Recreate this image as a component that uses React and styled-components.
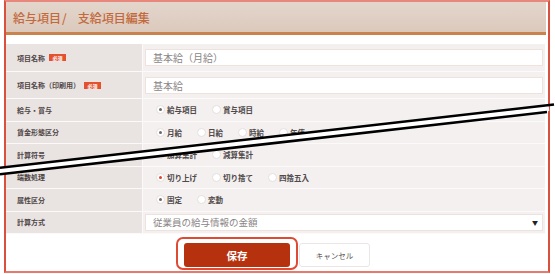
import styled, { createGlobalStyle } from "styled-components";

const Global = createGlobalStyle`
  html, body { margin: 0; padding: 0; background: #fff; }
  body { font-family: "Noto Sans CJK JP", "Noto Sans", sans-serif; }
`

const Page = styled.div`
  position: relative;
  width: 555px;
  height: 274px;
  overflow: hidden;
`

const Frame = styled.div`
  box-sizing: border-box;
  margin-left: 4px;
  width: 546px;
  height: 273px;
  border: 2px solid #d9503e;
  border-top-color: #e8887c;
  border-bottom-color: #e57a6d;
  display: flex;
  flex-direction: column;
`

const Header = styled.div`
  height: 30px;
  margin-right: 2px;
  padding-left: 7px;
  display: flex;
  align-items: center;
  background: linear-gradient(#e4d6cc, #dbc9bc);
  border-bottom: 3px solid #c8834e;
  font-size: 12px;
  font-weight: 500;
  color: #c3693c;
`

const Slash = styled.span`
  margin: 0 11px 0 1px;
`

const Table = styled.div`
  margin: 9px 3px 0 0;
  display: flex;
  flex-direction: column;
`

const Row = styled.div`
  box-sizing: border-box;
  display: flex;
  height: ${p => p.$h}px;
  border-bottom: 1px solid #fbf9f9;
`

const Label = styled.div`
  width: 136px;
  box-sizing: border-box;
  padding-left: 11px;
  display: flex;
  align-items: center;
  gap: 4px;
  background: #e9e3e2;
  font-size: 7px;
  font-weight: 700;
  color: #4f4646;
`

const Badge = styled.span`
  display: inline-flex;
  align-items: center;
  justify-content: center;
  width: 17px;
  height: 7px;
  background: #e4512f;
  color: #fff;
  font-size: 5px;
  font-weight: 700;
`

const Value = styled.div`
  flex: 1;
  display: flex;
  align-items: center;
  padding: 0 2px;
  background: #f4f0f0;
  border-left: 1px solid #fbf9f9;
`

const Field = styled.div`
  position: relative;
  flex: 1;
  box-sizing: border-box;
  height: 17px;
  padding-left: 7px;
  display: flex;
  align-items: center;
  background: #fff;
  border: 1px solid #eee2dc;
  font-size: ${p => p.$size || 10}px;
  color: #8a8585;
`

const Caret = styled.span`
  position: absolute;
  right: 4px;
  font-size: 6px;
  color: #222;
`

const Radios = styled.div`
  display: flex;
  padding-left: 11px;
  gap: 15px;
`

const Radio = styled.label`
  display: flex;
  align-items: center;
  gap: 2px;
  font-size: 7.5px;
  font-weight: 700;
  color: #4f4949;
`

const Circle = styled.span`
  box-sizing: border-box;
  width: 9px;
  height: 9px;
  border-radius: 50%;
  background: #fff;
  border: 1px solid #e6dfdf;
  display: flex;
  align-items: center;
  justify-content: center;
  &::after {
    content: "";
    width: 3px;
    height: 3px;
    border-radius: 50%;
    background: ${p => (p.$on ? p.$color || "#6f6a6a" : "transparent")};
  }
`

const Footer = styled.div`
  margin-top: 9px;
  display: flex;
  justify-content: center;
  gap: 9px;
`

const SaveWrap = styled.div`
  position: relative;
  &::after {
    content: "";
    position: absolute;
    inset: -6px -8px -3px -8px;
    border: 2px solid #df4a33;
    border-radius: 7px;
  }
`

const Button = styled.button`
  box-sizing: border-box;
  height: 24px;
  border-radius: 3px;
  font-family: inherit;
  display: flex;
  align-items: center;
  justify-content: center;
  padding: 0;
`

const Save = styled(Button)`
  width: 106px;
  background: #b6320f;
  border: none;
  color: #fff;
  font-size: 10.5px;
  font-weight: 700;
`

const Cancel = styled(Button)`
  width: 71px;
  background: #fff;
  border: 1px solid #ebe6e6;
  color: #555;
  font-size: 7.5px;
`

const Break = styled.svg`
  position: absolute;
  left: 0;
  top: 0;
  pointer-events: none;
`

function RadioGroup({ items, checked, color }) {
  return (
    <Radios>
      {items.map((t, i) => (
        <Radio key={t}>
          <Circle $on={i === checked} $color={color} />
          {t}
        </Radio>
      ))}
    </Radios>
  );
}

const rows = [
  { label: "給与・賞与", items: ["給与項目", "賞与項目"] },
  { label: "賃金形態区分", items: ["月給", "日給", "時給", "年俸"] },
  { label: "計算符号", items: ["加算集計", "減算集計"] },
  { label: "端数処理", items: ["切り上げ", "切り捨て", "四捨五入"], color: "#e2432a" },
  { label: "属性区分", items: ["固定", "変動"] },
];

export default function App() {
  return (
    <Page>
      <Global />
      <Frame>
        <Header>給与項目<Slash>/</Slash>支給項目編集</Header>
        <Table>
          <Row $h={28}>
            <Label>項目名称<Badge>必須</Badge></Label>
            <Value><Field>基本給（月給）</Field></Value>
          </Row>
          <Row $h={27}>
            <Label>項目名称（印刷用）<Badge>必須</Badge></Label>
            <Value><Field>基本給</Field></Value>
          </Row>
          {rows.map(r => (
            <Row $h={22.5} key={r.label}>
              <Label>{r.label}</Label>
              <Value><RadioGroup items={r.items} checked={0} color={r.color} /></Value>
            </Row>
          ))}
          <Row $h={22.5}>
            <Label>計算方式</Label>
            <Value>
              <Field $size={9.5}>従業員の給与情報の金額<Caret>▼</Caret></Field>
            </Value>
          </Row>
        </Table>
        <Footer>
          <SaveWrap><Save>保存</Save></SaveWrap>
          <Cancel>キャンセル</Cancel>
        </Footer>
      </Frame>
      <Break width="555" height="274">
        <line x1="0" y1="171" x2="549" y2="108.5" stroke="#fff" strokeWidth="5" />
        <line x1="0" y1="167.7" x2="554" y2="104.5" stroke="#000" strokeWidth="2.6" />
        <line x1="0" y1="174.3" x2="547" y2="112" stroke="#000" strokeWidth="2.6" />
      </Break>
    </Page>
  );
}
